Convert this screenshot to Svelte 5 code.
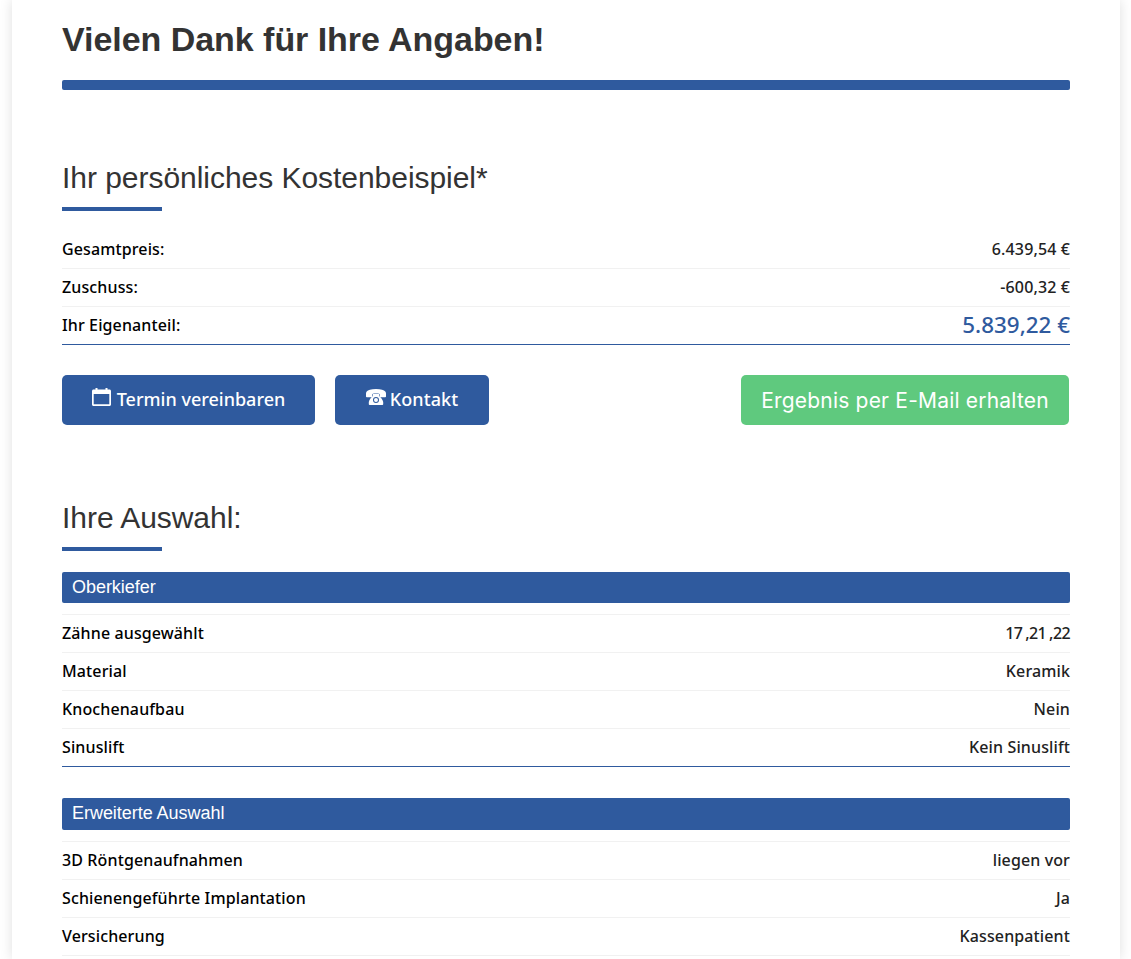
<script>
  const costs = [
    { label: "Gesamtpreis:", value: "6.439,54 €" },
    { label: "Zuschuss:", value: "-600,32 €" }
  ];
  const upper = [
    { label: "Zähne ausgewählt", value: "17 ,21 ,22", tight: true },
    { label: "Material", value: "Keramik" },
    { label: "Knochenaufbau", value: "Nein" },
    { label: "Sinuslift", value: "Kein Sinuslift" }
  ];
  const extended = [
    { label: "3D Röntgenaufnahmen", value: "liegen vor" },
    { label: "Schienengeführte Implantation", value: "Ja" },
    { label: "Versicherung", value: "Kassenpatient" }
  ];
</script>

<div class="page">
  <main class="panel">
    <h1>Vielen Dank für Ihre Angaben!</h1>
    <div class="bar"></div>

    <h2 class="first">Ihr persönliches Kostenbeispiel*</h2>
    <div class="underline"></div>

    <div class="rows">
      {#each costs as row}
        <div class="row"><span>{row.label}</span><span class="val">{row.value}</span></div>
      {/each}
      <div class="row last">
        <span>Ihr Eigenanteil:</span><span class="val total">5.839,22 €</span>
      </div>
    </div>

    <div class="actions">
      <button class="btn termin">
        <svg class="cal" width="19" height="18" viewBox="0 0 19 18" aria-hidden="true">
          <path fill="#fff" fill-rule="evenodd" d="M3.500 0h2v1.500h8V0h2v1.500h2c.8 0 1.500.7 1.500 1.500v13.500c0 .8-.7 1.500-1.500 1.500h-16C.7 18 0 17.300 0 16.500V3c0-.8.7-1.500 1.500-1.500h2zM1.700 6v10.300h15.600V6z"/>
        </svg>
        Termin vereinbaren
      </button>
      <button class="btn kontakt">
        <svg class="tel" width="20" height="16" viewBox="0 0 20 16" aria-hidden="true">
          <path fill="#fff" d="M10 0C15 0 18 1 19.300 2.400 19.800 3 20 3.700 20 4.500V7.500c0 .5-.3.800-.8.800h-4.800c-.5 0-.8-.3-.8-.8V5C12.800 4.700 11.500 4.600 10 4.600S7.200 4.700 6.400 5V7.500c0 .5-.3.800-.8.800H.8C.3 8.300 0 8 0 7.500V4.500C0 3.700.2 3 .7 2.400 2 1 5 0 10 0z"/>
          <path fill="#fff" fill-rule="evenodd" d="M7 5h6v2c1.600 1 3.800 3.600 4.200 6v2.200c0 .5-.4.800-.8.800H3.600c-.4 0-.8-.3-.8-.8V13c.4-2.400 2.600-5 4.200-6zM10 8a3 3 0 1 0 0 6 3 3 0 0 0 0-6zM10 9a2 2 0 1 1 0 4 2 2 0 0 1 0-4z"/>
        </svg>
        Kontakt
      </button>
      <button class="btn mail">Ergebnis per E-Mail erhalten</button>
    </div>

    <h2 class="second">Ihre Auswahl:</h2>
    <div class="underline"></div>

    <div class="group-head">Oberkiefer</div>
    <div class="rows boxed">
      {#each upper as row, i}
        <div class="row" class:last={i === upper.length - 1}><span>{row.label}</span><span class="val" class:tight={row.tight}>{row.value}</span></div>
      {/each}
    </div>

    <div class="group-head ext">Erweiterte Auswahl</div>
    <div class="rows boxed">
      {#each extended as row}
        <div class="row"><span>{row.label}</span><span class="val">{row.value}</span></div>
      {/each}
    </div>
  </main>
</div>

<style>
  :global(body) {
    background: #fff;
    overflow: hidden;
  }
  .page {
    height: 959px;
    overflow: hidden;
    padding: 0 11px 0 12px;
  }
  .panel {
    height: 100%;
    padding: 0 50px;
    background: #fff;
    box-shadow: 0 0 12px rgba(0, 0, 0, 0.13);
    color: #333;
    font-family: "Noto Sans", sans-serif;
  }
  h1 {
    margin: 0;
    padding-top: 19px;
    font: bold 34px/40px "Liberation Sans", Arial, sans-serif;
    letter-spacing: -0.04px;
  }
  .bar {
    height: 10px;
    margin-top: 21px;
    border-radius: 2px;
    background: #2f5a9e;
  }
  h2 {
    margin: 0;
    font: 400 30px/36px "Liberation Sans", Arial, sans-serif;
    letter-spacing: -0.04px;
  }
  h2.first {
    margin-top: 70px;
  }
  h2.second {
    margin-top: 75px;
  }
  .underline {
    width: 100px;
    height: 4px;
    margin-top: 11px;
    background: #2f5a9e;
  }
  .rows {
    margin-top: 20px;
    color: #000;
    font-size: 16px;
    font-weight: 500;
    letter-spacing: 0.12px;
  }
  .rows.boxed {
    margin-top: 11px;
    border-top: 1px solid #f1f1f1;
  }
  .row {
    display: flex;
    justify-content: space-between;
    align-items: center;
    height: 35px;
    padding-bottom: 2px;
    border-bottom: 1px solid #f1f1f1;
  }
  .row.last {
    border-bottom-color: #2f5a9e;
  }
  .val {
    color: #222;
  }
  .tight {
    letter-spacing: -0.6px;
    word-spacing: -0.6px;
  }
  .total {
    color: #2f5a9e;
    font-size: 22.4px;
    letter-spacing: 0;
  }
  .actions {
    display: flex;
    gap: 20px;
    margin-top: 30px;
  }
  .btn {
    display: flex;
    align-items: center;
    justify-content: center;
    height: 50px;
    padding: 0 0 2px;
    border: none;
    border-radius: 5px;
    background: #2f5a9e;
    color: #fff;
    font: 500 18px "Noto Sans", sans-serif;
  }
  .cal {
    margin: 0 6px 4px 0;
  }
  .tel {
    margin: 0 4px 4px 0;
  }
  .termin {
    width: 253px;
  }
  .kontakt {
    width: 154px;
    letter-spacing: 0.1px;
  }
  .mail {
    width: 328px;
    margin-left: auto;
    margin-right: 1px;
    padding: 0;
    background: #5fc97e;
    font: 400 21px Inter, sans-serif;
    letter-spacing: 0.2px;
  }
  .group-head {
    height: 31px;
    margin-top: 21px;
    padding-left: 10px;
    border-radius: 2px;
    background: #2f5a9e;
    color: #fff;
    font: 18px/30px "Liberation Sans", Arial, sans-serif;
    letter-spacing: -0.04px;
  }
  .group-head.ext {
    height: 32px;
    margin-top: 31px;
  }
</style>
